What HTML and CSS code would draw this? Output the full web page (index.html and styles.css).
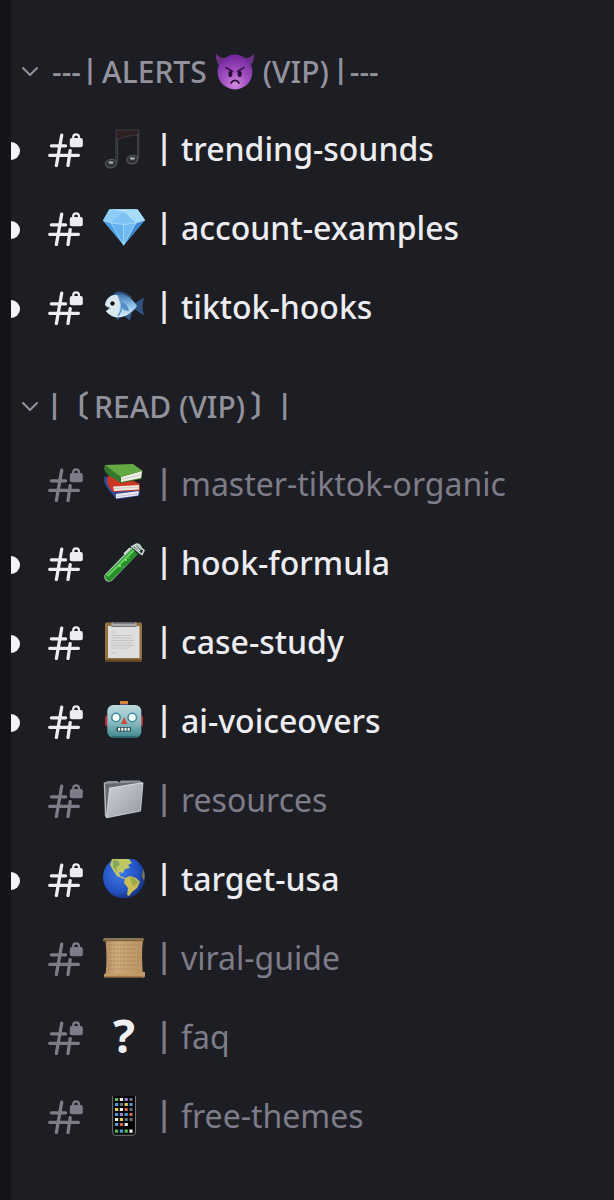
FILE: index.html
```html
<!DOCTYPE html>
<html lang="en">
<head>
<meta charset="utf-8">
<meta name="viewport" content="width=device-width, initial-scale=1">
<title>Channels</title>
<link rel="stylesheet" href="styles.css">
</head>
<body>
<svg class="sprite" aria-hidden="true">
  <defs>
    <radialGradient id="g-devil" cx=".5" cy=".85" r=".85"><stop offset="0" stop-color="#d48be0"/><stop offset=".4" stop-color="#a552c4"/><stop offset="1" stop-color="#6f259b"/></radialGradient>
    <linearGradient id="g-fish" x1="0" y1="0" x2="0" y2="1"><stop offset="0" stop-color="#3c6ea8"/><stop offset=".5" stop-color="#8fc3ea"/><stop offset="1" stop-color="#dceefa"/></linearGradient>
    <linearGradient id="g-bot" x1="0" y1="0" x2="0" y2="1"><stop offset="0" stop-color="#b9d9dc"/><stop offset=".5" stop-color="#8fbfc5"/><stop offset="1" stop-color="#3d858e"/></linearGradient>
    <linearGradient id="g-folder" x1="0" y1="0" x2="1" y2="1"><stop offset="0" stop-color="#ced2d8"/><stop offset="1" stop-color="#9599a3"/></linearGradient>
    <radialGradient id="g-globe" cx=".4" cy=".4" r=".65"><stop offset="0" stop-color="#3d78e8"/><stop offset=".7" stop-color="#2450c0"/><stop offset="1" stop-color="#162d75"/></radialGradient>
    <linearGradient id="g-scroll" x1="0" y1="0" x2="1" y2="0"><stop offset="0" stop-color="#b08c60"/><stop offset=".3" stop-color="#cfab7c"/><stop offset="1" stop-color="#b8925f"/></linearGradient>
  </defs>
  <symbol id="chevron" viewBox="0 0 18 12"><path d="M2 2l7 7 7-7" fill="none" stroke="currentColor" stroke-width="2" stroke-linecap="round" stroke-linejoin="round"/></symbol>
  <symbol id="hash" viewBox="0 0 36 36">
    <path d="M13.7 4.2L8.4 34.500M3.4 14.800H17.600M1.700 24.300H30.400M22.200 19.600L20 34.500" fill="none" stroke="currentColor" stroke-width="3.3" stroke-linecap="round"/>
    <path d="M25.2 8V6.300a2.900 2.900 0 0 1 5.800 0V8" fill="none" stroke="currentColor" stroke-width="2.2"/>
    <rect x="21.8" y="7" width="13" height="9.2" rx="2" fill="currentColor"/>
  </symbol>
  <symbol id="devil" viewBox="0 0 40 40">
    <path d="M1 2C0 9 4 15 10 17L15 7C9 7 4 5 1 2zM39 2C40 9 36 15 30 17L25 7C31 7 36 5 39 2z" fill="#6b3284"/>
    <circle cx="20" cy="20" r="17.4" fill="url(#g-devil)"/>
    <path d="M11 15.5l6.5 4M29 15.5l-6.5 4" stroke="#35104a" stroke-width="1.6" stroke-linecap="round"/>
    <ellipse cx="15.3" cy="22" rx="2" ry="3.1" fill="#2b0d33"/><ellipse cx="24.7" cy="22" rx="2" ry="3.1" fill="#2b0d33"/>
    <path d="M16 31c2-3.500 6-3.500 8 0" fill="none" stroke="#2b0d33" stroke-width="1.7" stroke-linecap="round"/>
  </symbol>
  <symbol id="music" viewBox="0 0 42 40">
    <path d="M13 1H36V6C28 6 20 8 13 11z" fill="#2e2022" stroke="#4a484c" stroke-width=".7"/>
    <path d="M13.7 10V33M35.2 5V29" stroke="#515359" stroke-width="2.200"/><path d="M13.7 10V33M35.2 5V29" stroke="#24262a" stroke-width=".8"/>
    <ellipse cx="8" cy="34.6" rx="5.6" ry="4.2" transform="rotate(-12 8 34.6)" fill="#303238" stroke="#5c5e64"/>
    <ellipse cx="29.4" cy="30.6" rx="5.6" ry="4.2" transform="rotate(-12 29.4 30.6)" fill="#303238" stroke="#5c5e64"/>
    <ellipse cx="8" cy="33.5" rx="2.6" ry="1.2" fill="#aaaeb3"/><ellipse cx="29.4" cy="29.5" rx="2.6" ry="1.2" fill="#aaaeb3"/>
  </symbol>
  <symbol id="gem" viewBox="0 0 42 40">
    <path d="M0 12.5L6.3 1.3H34.5L42 12 20.7 37.3z" fill="#62b2ef"/>
    <path d="M6.3 1.3L0 12.5l8 2.5L20.5 4z" fill="#8dcdf7"/><path d="M34.5 1.3L42 12l-9 3L20.5 4z" fill="#a7dcfb"/>
    <path d="M8 15L20.5 4 33 15l-12.5 1.5z" fill="#7dc3f5"/><path d="M6.3 1.3h28.2L20.5 4z" fill="#b9e5fc"/>
    <path d="M0 12.5l8 2.5 12.7 22.3z" fill="#4a9be2"/><path d="M42 12l-9 3-12.3 22.3z" fill="#3b89d4"/><path d="M20.5 16.5L33 15 20.7 37.3z" fill="#6fbdf3"/>
    <path d="M0 12.5l8 2.5 12.5 1.5L33 15l9-3M8 15l12.7 22.3L33 15M20.5 16.5v20" fill="none" stroke="#c7e9fd" stroke-width=".6"/>
  </symbol>
  <symbol id="fish" viewBox="0 0 42 40">
    <path d="M10 8C13 3 19 3 30 11zM29 17C34 16 37 12 41 11 39 17 39 22 41 28 36 26 33 22 28 21z" fill="#315381"/>
    <path d="M20 28L27 33.500 29 25zM10 28l5 5 3-4z" fill="#345a88"/>
    <path d="M2 18C4 4 24 2 34 19 25 32 10 34 3 24l3-3z" fill="url(#g-fish)"/>
    <path d="M2 18C4 9 9 8 14 8c4 6 4 14 0 21-5 0-9-2-11-5l3-3z" fill="#d9e8ef"/>
    <path d="M15 8c5 6 5 14 0 21" fill="none" stroke="#5791c2" stroke-width="1.3"/><path d="M18 16c5-1 7 4 8 8-5 0-8-3-8-8z" fill="#568fc6"/>
    <path d="M2.5 20l4 1-4 3" stroke="#394958" fill="none"/><circle cx="9.5" cy="16.5" r="3" fill="#f8fafb"/><circle cx="9.5" cy="16.5" r="2.2" fill="#111"/>
  </symbol>
  <symbol id="books" viewBox="0 0 42 40">
    <path d="M2 12c-2 4 0 9 4 14l7.500 9.500L36 32l1-5-20-5z" fill="#354c9d"/><path d="M13 30l23-3-1 4.500-22 3z" fill="#eceaf0"/>
    <path d="M14 32.5l22-3" stroke="#a8a8c0" stroke-width=".6"/>
    <path d="M5 12c-2 5 0 11 5 16l27-1.500-.500-7L20 13z" fill="#c93624"/><path d="M10 22.500l26-1.500v4.500L11 27z" fill="#f0e7e1"/><path d="M11 24.500l25-1.500" stroke="#b9afaa" stroke-width=".6"/>
    <path d="M2 1C0 5 2 8 5 11l13 8 20.5-4 1-8z" fill="#34762c"/><path d="M18 13l21-6-1 7-20 4z" fill="#f1efe9"/><path d="M18 15.5l20.5-5" stroke="#b9b8ae" stroke-width=".6"/>
    <path d="M2 1L30 0l9.5 6.8L18 13z" fill="#64a944"/>
  </symbol>
  <symbol id="tube" viewBox="0 0 42 40">
    <path d="M34 5L6 34" stroke="#a5c4aa" stroke-width="9.500" stroke-linecap="round"/>
    <path d="M32 8.5L6.3 34" stroke="#258f2b" stroke-width="7.6" stroke-linecap="round"/>
    <path d="M30 8L5 32.5" stroke="#65cf5c" stroke-width="2.3" stroke-linecap="round"/>
    <path d="M27 3l6-1 7 7-4 4z" fill="#26382f"/><path d="M29 3.5l5-2 7 6-2 4z" fill="none" stroke="#c8d5d0" stroke-width="1.6"/><path d="M32 3l5 5M27 5l-6 6" stroke="#eaf1ee" stroke-width="1.4"/>
    <g fill="#a5ef91"><circle cx="17" cy="23" r="1"/><circle cx="23" cy="17" r="1"/><circle cx="20" cy="24" r=".6"/><circle cx="26" cy="15" r=".6"/></g>
  </symbol>
  <symbol id="clipboard" viewBox="0 0 42 40">
    <rect x="2" y=".5" width="37" height="39" rx="1.5" fill="#93703f"/><path d="M2 38.5h37" stroke="#634725" stroke-width="2"/>
    <path d="M5 4h31.5v32H5z" fill="#dededd"/><path d="M8.5.5h25v4h-25z" fill="#a9abad"/><path d="M10 1h22" stroke="#52555a"/><path d="M8.5 4.5h25" stroke="#717377"/>
    <path d="M8 10h5M9 13.5h19M8 16h22M8 18.5h23M8 21h22M8 23.5h23M8 26h19M8 31h6" stroke="#c3c4c4"/>
  </symbol>
  <symbol id="robot" viewBox="0 0 42 40">
    <rect x="2" y="14.5" width="38" height="11" rx="2" fill="#b62e34"/><path d="M17 0h8v6h-8z" fill="#d88335"/><path d="M17 3h8v4h-8z" fill="#5c4876"/>
    <rect x="4.3" y="4" width="34" height="32.8" rx="6" fill="url(#g-bot)"/><path d="M9 36h25" stroke="#286168" stroke-width="1.4"/>
    <circle cx="13" cy="16.5" r="5" fill="#438f9d"/><circle cx="29.3" cy="16.5" r="5" fill="#438f9d"/><circle cx="13" cy="16.5" r="3.4" fill="#f5fbfa"/><circle cx="29.3" cy="16.5" r="3.4" fill="#f5fbfa"/>
    <path d="M21.2 16l3.4 7h-6.8z" fill="#c94a43"/><rect x="13.5" y="26" width="14.5" height="4.4" rx="1" fill="#25464e"/><path d="M15 28.2h12" stroke="#f1f1e9" stroke-width="3" stroke-dasharray="2.2 1"/>
  </symbol>
  <symbol id="folder" viewBox="0 0 42 40">
    <path d="M.7 2.500L5 1H14.500L16 2.500 18 .5H36.500L40 3 4 38 1.800 36z" fill="#8f949d"/>
    <path d="M2 4L37 2 8 8 5 34 3 36z" fill="#646974"/><path d="M1.500 3L3 37" stroke="#bfc3c9" stroke-width=".9"/><path d="M6.500 8L40 2.800 37.500 31 3.500 37.800z" fill="url(#g-folder)" stroke="#dddfe2" stroke-width=".8" stroke-linejoin="round"/>
  </symbol>
  <symbol id="globe" viewBox="0 0 42 40">
    <circle cx="21" cy="18.300" r="21" fill="url(#g-globe)"/>
    <path d="M9 0h17l3 4-4 2 2 3-5 1-2 4-4-1 1 4 5 2-1 1-7-3-4-6-3-5z" fill="#c0c865"/><path d="M10 1l5 1 2 4-4 2 2 6-5-6z" fill="#82a85a"/>
    <path d="M22 19l5-2 6 2 4 4-3 6-5 4-3 4-2-1 1-7-4-5z" fill="#c9bd55"/><path d="M27 18l5 2 3 4-5 3z" fill="#93a94c"/>
    <path d="M40 10c2 4 2 8 1 12l-2-5z" fill="#837b50"/>
  </symbol>
  <symbol id="scroll" viewBox="0 0 42 40">
    <path d="M2.500 2H40c-1.500 10-1 22 0 35H2.500c1.500-13 1-24 0-35z" fill="url(#g-scroll)"/>
    <path d="M6 7h31M6 11h30M6 15h31M6 19h31M6 23h30M6 27h30M6 31h29" stroke="#a98759" stroke-width=".8" stroke-dasharray="3 1 2 1"/>
    <rect x="0" y=".3" width="41" height="3" rx="1" fill="#806543"/><path d="M1 .8h39" stroke="#baa17c" stroke-width=".7"/>
    <rect x="1" y="35.600" width="41" height="3.800" rx="1.500" fill="#c49b67"/><path d="M2 39h38" stroke="#765330"/><circle cx="40.500" cy="35.500" r="1.800" fill="#c49b67"/>
  </symbol>
  <symbol id="phone" viewBox="0 0 42 40">
    <path d="M9.700 0V36q0 3.300 3 3.300H29.500q3 0 3-3.300V0z" fill="#050506"/><path d="M9.700 0V36q0 3.300 3 3.300H29.500q3 0 3-3.300V0" fill="none" stroke="#77787c"/>
    <g fill="#55bb59"><path d="M12 2h3.200v3H12zM12 33.500h3.200v3.200H12zM21.600 33.500h3.200v3.200h-3.200z"/></g>
    <g fill="#eceef0"><path d="M16.800 2H20v3h-3.200zM16.800 12H20v3h-3.200zM12 22h3.200v3H12zM21.600 27h3.200v3h-3.200zM26.400 33.500h3.200v3.200h-3.200z"/></g>
    <g fill="#4b9ddd"><path d="M12 7h3.200v3H12zM26.400 7h3.200v3h-3.200zM12 17h3.200v3H12zM21.600 17h3.200v3h-3.200zM12 27h3.200v3H12zM16.800 33.500H20v3.200h-3.200z"/></g>
    <g fill="#9d83c8"><path d="M21.600 2h3.200v3h-3.200zM16.800 17H20v3h-3.200z"/></g>
    <g fill="#69717b"><path d="M26.400 2h3.200v3h-3.200zM16.800 7H20v3h-3.200zM26.400 12h3.200v3h-3.200zM21.600 22h3.200v3h-3.200zM26.400 22h3.200v3h-3.200z"/></g>
    <g fill="#e4cf59"><path d="M12 12h3.200v3H12zM21.600 7h3.200v3h-3.200zM16.800 22H20v3h-3.200z"/></g>
    <g fill="#d86646"><path d="M21.600 12h3.200v3h-3.200zM26.400 17h3.200v3h-3.200zM16.800 27H20v3h-3.200z"/></g>
  </symbol>
</svg>
<main class="sidebar">
  <section class="category">
    <button class="category-toggle" type="button" aria-expanded="true">
      <svg class="chevron" aria-hidden="true"><use href="#chevron"/></svg>
      <span class="category-name"><span class="edge"><span class="dashes">---</span><span class="rule">|</span></span><span>ALERTS</span><svg class="category-emoji" role="img" aria-label="devil"><use href="#devil"/></svg><span>(VIP)</span><span class="edge"><span class="rule">|</span><span class="dashes">---</span></span></span>
    </button>
    <nav class="channels" aria-label="Alerts">
      <a class="channel unread" href="#trending-sounds"><svg class="hash"><use href="#hash"/></svg><svg class="emoji"><use href="#music"/></svg><span class="bar">|</span><span>trending-sounds</span></a>
      <a class="channel unread" href="#account-examples"><svg class="hash"><use href="#hash"/></svg><svg class="emoji"><use href="#gem"/></svg><span class="bar">|</span><span>account-examples</span></a>
      <a class="channel unread" href="#tiktok-hooks"><svg class="hash"><use href="#hash"/></svg><svg class="emoji"><use href="#fish"/></svg><span class="bar">|</span><span>tiktok-hooks</span></a>
    </nav>
  </section>
  <section class="category">
    <button class="category-toggle" type="button" aria-expanded="true">
      <svg class="chevron" aria-hidden="true"><use href="#chevron"/></svg>
      <span class="category-name bracketed"><span class="edge"><span class="rule">|</span><span class="bracket">〔</span></span><span>READ (VIP)</span><span class="edge"><span class="bracket">〕</span><span class="rule">|</span></span></span>
    </button>
    <nav class="channels" aria-label="Read">
      <a class="channel" href="#master-tiktok-organic"><svg class="hash"><use href="#hash"/></svg><svg class="emoji"><use href="#books"/></svg><span class="bar">|</span><span>master-tiktok-organic</span></a>
      <a class="channel unread" href="#hook-formula"><svg class="hash"><use href="#hash"/></svg><svg class="emoji"><use href="#tube"/></svg><span class="bar">|</span><span>hook-formula</span></a>
      <a class="channel unread" href="#case-study"><svg class="hash"><use href="#hash"/></svg><svg class="emoji"><use href="#clipboard"/></svg><span class="bar">|</span><span>case-study</span></a>
      <a class="channel unread" href="#ai-voiceovers"><svg class="hash"><use href="#hash"/></svg><svg class="emoji"><use href="#robot"/></svg><span class="bar">|</span><span>ai-voiceovers</span></a>
      <a class="channel" href="#resources"><svg class="hash"><use href="#hash"/></svg><svg class="emoji"><use href="#folder"/></svg><span class="bar">|</span><span>resources</span></a>
      <a class="channel unread" href="#target-usa"><svg class="hash"><use href="#hash"/></svg><svg class="emoji"><use href="#globe"/></svg><span class="bar">|</span><span>target-usa</span></a>
      <a class="channel" href="#viral-guide"><svg class="hash"><use href="#hash"/></svg><svg class="emoji"><use href="#scroll"/></svg><span class="bar">|</span><span>viral-guide</span></a>
      <a class="channel" href="#faq"><svg class="hash"><use href="#hash"/></svg><span class="emoji question">?</span><span class="bar">|</span><span>faq</span></a>
      <a class="channel" href="#free-themes"><svg class="hash"><use href="#hash"/></svg><svg class="emoji"><use href="#phone"/></svg><span class="bar">|</span><span>free-themes</span></a>
    </nav>
  </section>
</main>
</body>
</html>
```
FILE: styles.css
```css
* { box-sizing: border-box; }

body {
  margin: 0;
  background: #1d1e23;
  font-family: "Noto Sans", "Noto Sans CJK JP", sans-serif;
}

.sprite { position: absolute; width: 0; height: 0; }

.sidebar {
  min-height: 100vh;
  padding-top: 34px;
  border-left: 11px solid #16141a;
  overflow: hidden;
}

.category + .category { margin-top: 23px; }

.category-toggle {
  display: flex;
  align-items: center;
  gap: 8px;
  width: 100%;
  height: 75px;
  padding: 0 0 0 10px;
  border: 0;
  background: none;
  color: #92929d;
  font: inherit;
  font-size: 30px;
  font-weight: 500;
  text-align: left;
}

.chevron { width: 18px; height: 12px; flex: none; }

.category-name {
  display: flex;
  align-items: center;
  gap: 8px;
  white-space: nowrap;
}

.category-name.bracketed { gap: 5px; }

.category-emoji { width: 40px; height: 40px; }

.edge { display: flex; align-items: center; }

.bracketed .edge { gap: 12px; }

.dashes { width: 39px; text-align: center; }

.rule {
  display: flex;
  justify-content: center;
  width: 8px;
  padding-bottom: 6px;
  font-size: 27px;
  font-weight: 700;
}

.bracketed .rule { width: 15px; }

.bracket {
  padding-bottom: 6px;
  font-family: "Noto Sans CJK JP", sans-serif;
  font-feature-settings: "halt";
  font-weight: 700;
  line-height: 44px;
}

.channels { display: flex; flex-direction: column; }

.channel {
  position: relative;
  display: flex;
  align-items: center;
  height: 79px;
  padding-left: 37px;
  color: #7d7c88;
  font-size: 32px;
  text-decoration: none;
  white-space: nowrap;
}

.channel.unread { color: #ececf1; font-weight: 500; }

.channel.unread::before {
  content: "";
  position: absolute;
  left: -9px;
  top: 33px;
  width: 18px;
  height: 18px;
  border-radius: 50%;
  background: #f4f4f7;
}

.hash { width: 36px; height: 36px; margin-right: 19px; flex: none; }

.emoji { width: 42px; height: 40px; margin-right: 10px; flex: none; }

.question {
  color: #f0f0f2;
  font-size: 46px;
  font-weight: 700;
  line-height: 36px;
  text-align: center;
}

.bar {
  width: 18px;
  margin-right: 8px;
  padding-bottom: 6px;
  font-weight: 600;
  line-height: 36px;
  text-align: center;
}
```
